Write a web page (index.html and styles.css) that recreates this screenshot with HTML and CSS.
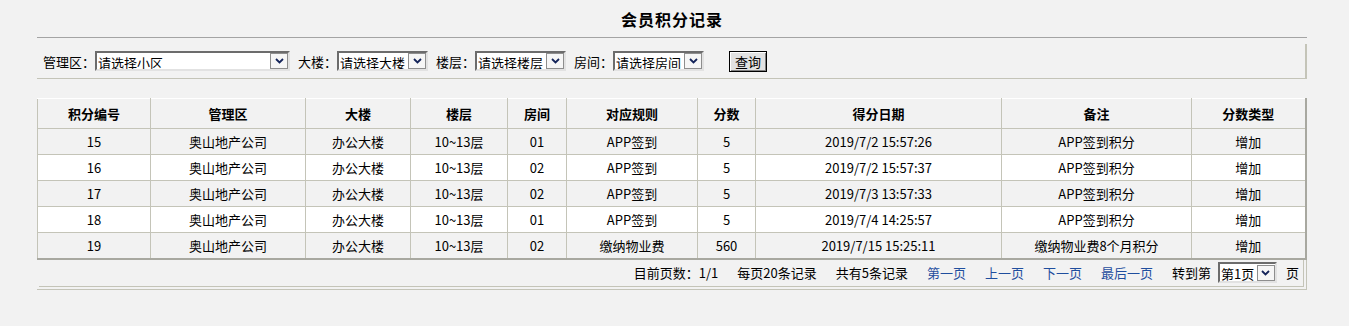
FILE: index.html
```html
<!DOCTYPE html>
<html>
<head>
    <meta charset="utf-8">
    <title>会员积分记录</title>
    <link rel="stylesheet" href="styles.css">
</head>
<body>
    <div class="page">
        <div class="title">会员积分记录</div>

        <form class="filter" onsubmit="return false;">
            <label class="filter-label">管理区：</label>
            <span class="combo combo-wide">
                <select><option>请选择小区</option></select>
                <span class="combo-btn"><svg viewBox="0 0 9 6" width="9" height="6"><polyline points="1,1 4.5,4.5 8,1" fill="none" stroke="#14245a" stroke-width="1.8"/></svg></span>
            </span>
            <label class="filter-label">大楼：</label>
            <span class="combo">
                <select><option>请选择大楼</option></select>
                <span class="combo-btn"><svg viewBox="0 0 9 6" width="9" height="6"><polyline points="1,1 4.5,4.5 8,1" fill="none" stroke="#14245a" stroke-width="1.8"/></svg></span>
            </span>
            <label class="filter-label">楼层：</label>
            <span class="combo">
                <select><option>请选择楼层</option></select>
                <span class="combo-btn"><svg viewBox="0 0 9 6" width="9" height="6"><polyline points="1,1 4.5,4.5 8,1" fill="none" stroke="#14245a" stroke-width="1.8"/></svg></span>
            </span>
            <label class="filter-label">房间：</label>
            <span class="combo">
                <select><option>请选择房间</option></select>
                <span class="combo-btn"><svg viewBox="0 0 9 6" width="9" height="6"><polyline points="1,1 4.5,4.5 8,1" fill="none" stroke="#14245a" stroke-width="1.8"/></svg></span>
            </span>
            <button type="submit" class="btn-query">查询</button>
        </form>

        <table class="grid">
            <colgroup>
                <col style="width:113px">
                <col style="width:155px">
                <col style="width:105px">
                <col style="width:97px">
                <col style="width:59px">
                <col style="width:131px">
                <col style="width:58px">
                <col style="width:246px">
                <col style="width:190px">
                <col style="width:114px">
            </colgroup>
            <thead>
                <tr>
                    <th>积分编号</th>
                    <th>管理区</th>
                    <th>大楼</th>
                    <th>楼层</th>
                    <th>房间</th>
                    <th>对应规则</th>
                    <th>分数</th>
                    <th>得分日期</th>
                    <th>备注</th>
                    <th>分数类型</th>
                </tr>
            </thead>
            <tbody>
                <tr>
                    <td>15</td><td>奥山地产公司</td><td>办公大楼</td><td>10~13层</td><td>01</td>
                    <td>APP签到</td><td>5</td><td>2019/7/2 15:57:26</td><td>APP签到积分</td><td>增加</td>
                </tr>
                <tr>
                    <td>16</td><td>奥山地产公司</td><td>办公大楼</td><td>10~13层</td><td>02</td>
                    <td>APP签到</td><td>5</td><td>2019/7/2 15:57:37</td><td>APP签到积分</td><td>增加</td>
                </tr>
                <tr>
                    <td>17</td><td>奥山地产公司</td><td>办公大楼</td><td>10~13层</td><td>02</td>
                    <td>APP签到</td><td>5</td><td>2019/7/3 13:57:33</td><td>APP签到积分</td><td>增加</td>
                </tr>
                <tr>
                    <td>18</td><td>奥山地产公司</td><td>办公大楼</td><td>10~13层</td><td>01</td>
                    <td>APP签到</td><td>5</td><td>2019/7/4 14:25:57</td><td>APP签到积分</td><td>增加</td>
                </tr>
                <tr>
                    <td>19</td><td>奥山地产公司</td><td>办公大楼</td><td>10~13层</td><td>02</td>
                    <td>缴纳物业费</td><td>560</td><td>2019/7/15 15:25:11</td><td>缴纳物业费8个月积分</td><td>增加</td>
                </tr>
            </tbody>
        </table>

        <div class="pager-wrap">
            <div class="pager">
                <span>目前页数：1/1</span>
                <span>每页20条记录</span>
                <span>共有5条记录</span>
                <a href="#">第一页</a>
                <a href="#">上一页</a>
                <a href="#">下一页</a>
                <a href="#">最后一页</a>
                <span>转到第</span>
                <span class="combo combo-page">
                    <select><option>第1页</option></select>
                    <span class="combo-btn"><svg viewBox="0 0 9 6" width="9" height="6"><polyline points="1,1 4.5,4.5 8,1" fill="none" stroke="#14245a" stroke-width="1.8"/></svg></span>
                </span>
                <span class="pager-end">页</span>
            </div>
        </div>
    </div>
</body>
</html>
```

FILE: styles.css
```css
* {
    margin: 0;
    padding: 0;
    box-sizing: border-box;
}

body {
    background: #f2f2f2;
    color: #000;
    font-family: "Noto Sans CJK SC", "Liberation Sans", sans-serif;
    font-size: 13px;
}

.page {
    width: 1270px;
    margin-left: 37px;
}

.title {
    height: 38px;
    line-height: 38px;
    text-align: center;
    font-size: 16px;
    font-weight: 700;
    letter-spacing: 1px;
    border-bottom: 1px solid #a4a4a4;
}

.filter {
    display: flex;
    align-items: center;
    height: 35px;
    margin-top: 6px;
    padding-left: 6px;
    border-right: 2px solid #c4c4b8;
    border-bottom: 1px solid #c4c4b8;
}

.filter-label {
    margin-left: 8px;
    white-space: nowrap;
}

.filter-label:first-child {
    margin-left: 0;
}

.combo {
    display: inline-flex;
    align-items: center;
    width: 91px;
    height: 20px;
    background: #fff;
    border-style: solid;
    border-width: 2px;
    border-color: #6c6c6c #e2e2e2 #e2e2e2 #6c6c6c;
}

.combo-wide {
    width: 195px;
}

.combo-page {
    width: 59px;
    height: 21px;
}

.combo select {
    flex: 1;
    min-width: 0;
    height: 100%;
    border: none;
    outline: none;
    background: transparent;
    appearance: none;
    -webkit-appearance: none;
    font-family: inherit;
    font-size: 13px;
    color: #000;
    padding-left: 1px;
}

.combo-btn {
    display: flex;
    align-items: center;
    justify-content: center;
    width: 18px;
    height: 16px;
    border: 1px solid #8e8e8e;
    background: #f6f6f6;
}

.btn-query {
    margin-left: 25px;
    width: 38px;
    height: 21px;
    border: 1px solid #000;
    background: #e2e2e2;
    box-shadow: inset 1px 1px 0 #fff, inset -1px -1px 0 #808080;
    font-family: inherit;
    font-size: 13px;
    line-height: 17px;
    color: #000;
}

.grid {
    width: 1269px;
    margin-top: 19px;
    border-collapse: collapse;
    table-layout: fixed;
    border-top: 1px solid #fff;
    border-left: 1px solid #fff;
    border-right: 2px solid #a8a8a0;
    border-bottom: 2px solid #a8a8a0;
}

.grid th,
.grid td {
    border: 1px solid #c4c4b8;
    text-align: center;
    white-space: nowrap;
    overflow: hidden;
}

.grid th {
    height: 30px;
    font-weight: 700;
    background: #f2f2f2;
    border-top-color: #fff;
}

.grid td {
    height: 26px;
}

.grid tbody tr:nth-child(odd) {
    background: #f2f2f2;
}

.grid tbody tr:nth-child(even) {
    background: #fff;
}

.pager-wrap {
    width: 1270px;
    padding: 0 2px 2px 2px;
    border-bottom: 1px solid #c4c4b8;
    border-right: 1px solid #c4c4b8;
}

.pager {
    display: flex;
    align-items: center;
    justify-content: flex-end;
    height: 27px;
    padding-right: 4px;
    border-bottom: 1px solid #c4c4b8;
    border-right: 1px solid #c4c4b8;
}

.pager > span,
.pager > a {
    margin-left: 19px;
    white-space: nowrap;
}

.pager > span:first-child {
    margin-left: 0;
}

.pager a {
    color: #1f4e9e;
    text-decoration: none;
}

.pager > .combo-page {
    margin-left: 7px;
}

.pager > .pager-end {
    margin-left: 9px;
}
```
